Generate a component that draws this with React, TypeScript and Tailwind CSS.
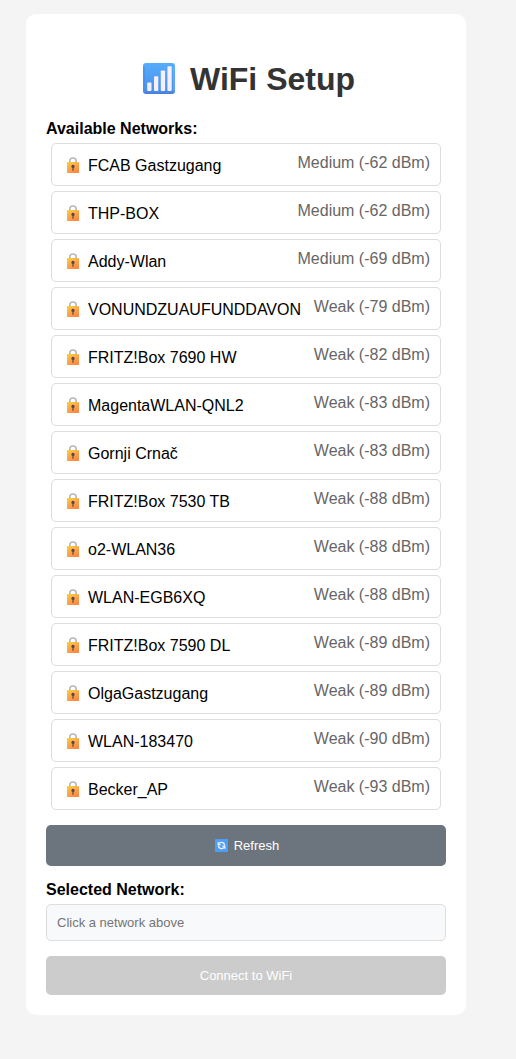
type Network = { ssid: string; quality: string; dbm: number };

const networks: Network[] = [
  { ssid: "FCAB Gastzugang", quality: "Medium", dbm: -62 },
  { ssid: "THP-BOX", quality: "Medium", dbm: -62 },
  { ssid: "Addy-Wlan", quality: "Medium", dbm: -69 },
  { ssid: "VONUNDZUAUFUNDDAVON", quality: "Weak", dbm: -79 },
  { ssid: "FRITZ!Box 7690 HW", quality: "Weak", dbm: -82 },
  { ssid: "MagentaWLAN-QNL2", quality: "Weak", dbm: -83 },
  { ssid: "Gornji Crnač", quality: "Weak", dbm: -83 },
  { ssid: "FRITZ!Box 7530 TB", quality: "Weak", dbm: -88 },
  { ssid: "o2-WLAN36", quality: "Weak", dbm: -88 },
  { ssid: "WLAN-EGB6XQ", quality: "Weak", dbm: -88 },
  { ssid: "FRITZ!Box 7590 DL", quality: "Weak", dbm: -89 },
  { ssid: "OlgaGastzugang", quality: "Weak", dbm: -89 },
  { ssid: "WLAN-183470", quality: "Weak", dbm: -90 },
  { ssid: "Becker_AP", quality: "Weak", dbm: -93 },
];

function SignalIcon() {
  return (
    <svg className="size-8 shrink-0" viewBox="0 0 32 32" aria-hidden="true">
      <defs>
        <linearGradient id="signal-bg" x1="0" y1="0" x2="0" y2="1">
          <stop offset="0" stopColor="#55adfb" />
          <stop offset="0.9" stopColor="#4b90ec" />
          <stop offset="1" stopColor="#477bd8" />
        </linearGradient>
      </defs>
      <rect width="32" height="31" rx="3" fill="url(#signal-bg)" />
      <path d="M1 4v23" stroke="#438fe6" strokeWidth="1.2" strokeLinecap="round" />
      <path d="M31 4v23" stroke="#6bb6fb" strokeWidth="1" strokeLinecap="round" />
      <g fill="#f8effc">
        <rect x="4.2" y="19.6" width="4.3" height="8.4" rx="0.9" />
        <rect x="11" y="13.2" width="4.3" height="14.8" rx="0.9" />
        <rect x="17.8" y="7.4" width="4.3" height="20.6" rx="0.9" />
        <rect x="24.4" y="3.2" width="4.3" height="24.8" rx="0.9" />
      </g>
    </svg>
  );
}

function LockIcon() {
  return (
    <svg className="h-4 w-3 shrink-0" viewBox="0 0 12 16" aria-hidden="true">
      <defs>
        <linearGradient id="lock-body" x1="0.2" y1="0" x2="0.8" y2="1">
          <stop offset="0" stopColor="#fcc843" />
          <stop offset="1" stopColor="#fb8348" />
        </linearGradient>
      </defs>
      <path d="M2.8 6V4.2a3.2 3.2 0 0 1 6.4 0V6" fill="none" stroke="#b9b5bf" strokeWidth="1.6" />
      <rect y="5" width="12" height="11" rx="0.8" fill="url(#lock-body)" />
      <circle cx="6" cy="9.4" r="1.6" fill="#5b4450" />
      <rect x="5.4" y="10" width="1.2" height="3.8" rx="0.5" fill="#5b4450" />
    </svg>
  );
}

function RefreshIcon() {
  return (
    <svg className="size-[13px] shrink-0" viewBox="0 0 13 13" aria-hidden="true">
      <rect width="13" height="13" rx="0.8" fill="#4c9ff5" />
      <g fill="none" stroke="#e8f1ff" strokeWidth="1.4">
        <path d="M4.2 4.2C5.7 2.9 9.5 2.9 9.6 6.7" />
        <path d="M8.8 8.8C7.3 10.1 3.5 10.1 3.4 6.3" />
      </g>
      <path d="M2.6 2.5v3.7h3.7zM10.4 10.5V6.8H6.7z" fill="#e8f1ff" />
    </svg>
  );
}

function NetworkRow({ network }: { network: Network }) {
  return (
    <li>
      <button
        type="button"
        className="flex w-full cursor-pointer items-start justify-between rounded-[5px] border border-[#dddddd] bg-white pt-[10px] pr-[10px] pb-[7px] pl-[15px] text-left"
      >
        <span className="flex items-start gap-[9px] leading-6 text-black">
          <span className="flex pt-[3px]">
            <LockIcon />
          </span>
          {network.ssid}
        </span>
        <span className="shrink-0 leading-[18px] text-[#666666]">
          {`${network.quality} (${network.dbm} dBm)`}
        </span>
      </button>
    </li>
  );
}

export default function App() {
  return (
    <div className="min-h-screen bg-[#f4f4f4] pt-[14px] pr-[50px] pb-11 pl-[26px] font-['Liberation_Sans',Arial,sans-serif] text-base text-black">
      <main className="max-w-[440px] rounded-[10px] bg-white p-5">
        <h1 className="mt-[26px] mb-5 flex items-center justify-center gap-[15px] pl-[6px] text-[32px] leading-[38px] font-bold text-[#333333]">
          <SignalIcon />
          WiFi Setup
        </h1>

        <h2 id="networks-title" className="pt-px leading-[20px] font-bold">Available Networks:</h2>
        <ul aria-labelledby="networks-title" className="mt-1 flex flex-col gap-[5px] px-[5px]">
          {networks.map((network) => (
            <NetworkRow key={network.ssid} network={network} />
          ))}
        </ul>

        <button
          type="button"
          className="mt-[15px] flex h-[41px] w-full cursor-pointer items-center justify-center gap-[6px] rounded-[5px] bg-[#6c757d] pl-[2px] text-[13px] text-white"
        >
          <RefreshIcon />
          Refresh
        </button>

        <label htmlFor="ssid" className="mt-[13px] block pt-px leading-[20px] font-bold">
          Selected Network:
        </label>
        <input
          id="ssid"
          type="text"
          readOnly
          placeholder="Click a network above"
          className="mt-1 block h-[37px] w-full rounded-[5px] border border-[#dddddd] bg-[#f8f9fa] px-[10px] text-[13px] placeholder:text-[#757575]"
        />
        <button
          type="button"
          disabled
          className="mt-[15px] block h-[39px] w-full rounded-[5px] bg-[#cccccc] text-[13px] text-white"
        >
          Connect to WiFi
        </button>
      </main>
    </div>
  );
}
